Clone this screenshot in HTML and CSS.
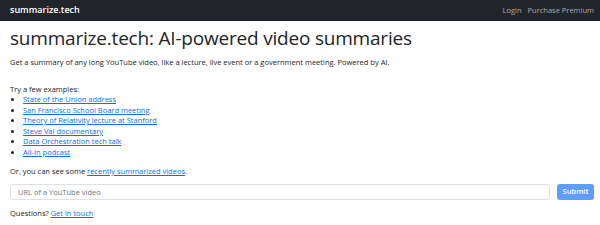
FILE: index.html
```html
<!DOCTYPE html>
<html lang="en">
<head>
<meta charset="utf-8">
<title>summarize.tech</title>
<link rel="stylesheet" href="styles.css">
</head>
<body>
<nav class="navbar">
  <a class="brand" href="#">summarize.tech</a>
  <div class="nav-links">
    <a href="#">Login</a>
    <a href="#">Purchase Premium</a>
  </div>
</nav>
<main class="container">
  <h1 class="title">summarize.tech: AI-powered video summaries</h1>
  <p class="lead">Get a summary of any long YouTube video, like a lecture, live event or a government meeting. Powered by AI.</p>
  <p class="examples-label">Try a few examples:</p>
  <ul class="examples">
    <li><a href="#">State of the Union address</a></li>
    <li><a href="#">San Francisco School Board meeting</a></li>
    <li><a href="#">Theory of Relativity lecture at Stanford</a></li>
    <li><a href="#">Steve Vai documentary</a></li>
    <li><a href="#">Data Orchestration tech talk</a></li>
    <li><a href="#">All-In podcast</a></li>
  </ul>
  <p class="recent">Or, you can see some <a href="#">recently summarized videos</a>.</p>
  <form class="url-form">
    <input class="url-input" type="text" placeholder="URL of a YouTube video">
    <button class="submit" type="button">Submit</button>
  </form>
  <p class="questions">Questions? <a href="#">Get in touch</a></p>
</main>
</body>
</html>
```
FILE: styles.css
```css
* { box-sizing: border-box; }
html, body { margin: 0; padding: 0; }
body {
  font-family: "Open Sans", "Noto Sans", sans-serif;
  font-size: 7.5px;
  line-height: 10.5px;
  color: #212529;
  background: #fff;
}
a { color: #0d6efd; }
.navbar {
  height: 21px;
  background: #212529;
  display: flex;
  align-items: center;
  justify-content: space-between;
  padding: 0 6px 0 10px;
}
.brand {
  color: #fff;
  text-decoration: none;
  font-size: 9px;
  font-weight: 600;
}
.nav-links { display: flex; gap: 6px; }
.nav-links a {
  color: rgba(255,255,255,0.6);
  text-decoration: none;
  font-size: 7.5px;
}
.container { padding: 0 6px 0 10px; }
.title {
  margin: 5px 0 0;
  font-size: 19px;
  letter-spacing: -0.2px;
  line-height: 24px;
  font-weight: 400;
}
.lead { margin: 7px 0 0; }
.examples-label { margin: 16px 0 0; }
.examples { margin: 0; padding-left: 13px; }
.recent { margin: 9px 0 0; }
.url-form {
  display: flex;
  gap: 7px;
  margin-top: 7px;
}
.url-input {
  flex: 1;
  height: 16px;
  border: 1px solid #dee2e6;
  border-radius: 3px;
  padding: 0 7px;
  font: inherit;
  color: #212529;
}
.url-input::placeholder { color: #6c757d; }
.submit {
  height: 16px;
  width: 37px;
  border: none;
  border-radius: 3px;
  background: #5f9dfa;
  color: #fff;
  font: inherit;
  font-weight: 600;
  padding: 0;
}
.questions { margin: 8px 0 0; }
```
